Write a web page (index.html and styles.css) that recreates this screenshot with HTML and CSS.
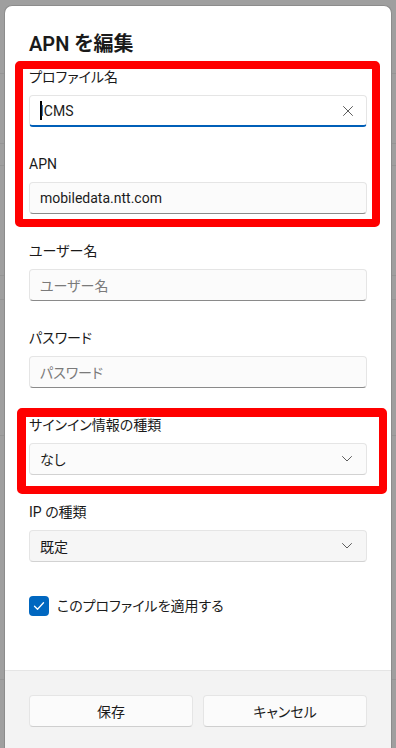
FILE: index.html
```html
<!DOCTYPE html>
<html>
<head>
  <title>APN を編集</title>
  <link rel="stylesheet" href="styles.css">
</head>
<body>
  <div class="dialog">
    <div class="dialog-body">
      <h1 class="dialog-title">APN を編集</h1>
      <div class="fields">
        <div class="field">
          <div class="field-label">プロファイル名</div>
          <div class="textbox focused">
            <span class="value"><span class="caret"></span>ICMS</span>
            <svg class="clear-icon" width="10" height="10" viewBox="0 0 10 10" fill="none" stroke="currentColor" stroke-width="1" stroke-linecap="round"><path d="M0.5 0.5l9 9M9.5 0.5l-9 9"/></svg>
          </div>
        </div>
        <div class="field">
          <div class="field-label">APN</div>
          <div class="textbox"><span class="value">mobiledata.ntt.com</span></div>
        </div>
        <div class="field">
          <div class="field-label">ユーザー名</div>
          <div class="textbox"><span class="placeholder">ユーザー名</span></div>
        </div>
        <div class="field">
          <div class="field-label">パスワード</div>
          <div class="textbox"><span class="placeholder">パスワード</span></div>
        </div>
        <div class="field">
          <div class="field-label">サインイン情報の種類</div>
          <div class="combobox">
            <span class="value">なし</span>
            <svg class="chevron" width="10" height="6" viewBox="0 0 10 6" fill="none" stroke="currentColor" stroke-width="1" stroke-linecap="round" stroke-linejoin="round"><path d="M0.5 0.5L5 5l4.5-4.5"/></svg>
          </div>
        </div>
        <div class="field">
          <div class="field-label">IP の種類</div>
          <div class="combobox hover">
            <span class="value">既定</span>
            <svg class="chevron" width="10" height="6" viewBox="0 0 10 6" fill="none" stroke="currentColor" stroke-width="1" stroke-linecap="round" stroke-linejoin="round"><path d="M0.5 0.5L5 5l4.5-4.5"/></svg>
          </div>
        </div>
      </div>
      <div class="check-row">
        <span class="check-box">
          <svg width="12" height="10" viewBox="0 0 12 10" fill="none" stroke="#fff" stroke-width="1.3" stroke-linecap="round" stroke-linejoin="round"><path d="M1.5 5.2l3 3 6-6.5"/></svg>
        </span>
        <span class="check-text">このプロファイルを適用する</span>
      </div>
    </div>
    <div class="dialog-footer">
      <button class="btn">保存</button>
      <button class="btn">キャンセル</button>
    </div>
  </div>
  <div class="mark mark-profile"></div>
  <div class="mark mark-signin"></div>
</body>
</html>
```

FILE: styles.css
```css
* {
  box-sizing: border-box;
  margin: 0;
  padding: 0;
}
body {
  width: 396px;
  height: 748px;
  overflow: hidden;
  position: relative;
  padding: 5px 4px 0;
  font-family: Roboto, "Noto Sans CJK JP", sans-serif;
  font-feature-settings: "palt";
  color: #1b1b1b;
  background-color: #9f9f9f;
  background-image:
    linear-gradient(#959595, #959595),
    linear-gradient(#959595, #959595),
    linear-gradient(#959595, #959595),
    linear-gradient(#959595, #959595),
    linear-gradient(#959595, #959595),
    linear-gradient(#959595, #959595),
    linear-gradient(#959595, #959595);
  background-size: 100% 1px;
  background-repeat: no-repeat;
  background-position: 0 73px, 0 143px, 0 165px, 0 275px, 0 299px, 0 435px, 0 679px;
}
.dialog {
  width: 388px;
  height: 745px;
  background: #fff;
  border: 1px solid #8c8c8c;
  border-bottom: none;
  border-radius: 8px 8px 0 0;
  display: flex;
  flex-direction: column;
  overflow: hidden;
}
.dialog-body {
  flex: 1;
  padding: 24px 24px 0;
}
.dialog-title {
  font-size: 20px;
  line-height: 28px;
  font-weight: 600;
  color: #1a1a1a;
  margin-bottom: 9px;
}
.fields {
  display: flex;
  flex-direction: column;
  gap: 27px;
}
.field-label {
  font-size: 14px;
  line-height: 20px;
  color: #1a1a1a;
  margin-bottom: 8px;
}
.textbox,
.combobox {
  height: 32px;
  display: flex;
  align-items: center;
  padding: 0 11px 0 10px;
  background: #fbfbfb;
  border: 1px solid #e5e5e5;
  border-bottom-color: #8a8a8a;
  border-radius: 4px;
  font-size: 14px;
}
.textbox.focused {
  background: #fff;
  border-bottom: 2px solid #005fb8;
}
.combobox {
  border-bottom-color: #d2d2d2;
  padding-right: 14px;
}
.combobox.hover {
  background: #f6f6f6;
}
.value {
  flex: 1;
  color: #1b1b1b;
  display: flex;
  align-items: center;
}
.placeholder {
  flex: 1;
  color: #7a7a7a;
}
.caret {
  width: 1.5px;
  height: 19px;
  background: #000;
  margin-right: -1.5px;
}
.clear-icon {
  color: #5d5d5d;
  margin-right: 2px;
}
.chevron {
  color: #5d5d5d;
}
.check-row {
  margin-top: 34px;
  display: flex;
  align-items: center;
  gap: 8px;
  font-size: 14px;
  line-height: 20px;
}
.check-box {
  width: 20px;
  height: 20px;
  border-radius: 4px;
  background: #0067c0;
  display: flex;
  align-items: center;
  justify-content: center;
}
.dialog-footer {
  height: 80px;
  flex-shrink: 0;
  background: #f3f3f3;
  border-top: 1px solid #e5e5e5;
  padding: 24px 24px 0;
  display: flex;
  gap: 10px;
}
.btn {
  flex: 1;
  height: 32px;
  background: #fbfbfb;
  border: 1px solid #e5e5e5;
  border-bottom-color: #cfcfcf;
  border-radius: 4px;
  font-family: inherit;
  font-feature-settings: "palt";
  font-size: 14px;
  color: #1b1b1b;
}
.mark {
  position: absolute;
  border: 8px solid #ff0000;
  border-radius: 5px;
}
.mark-profile {
  left: 15px;
  top: 61px;
  width: 365px;
  height: 166px;
}
.mark-signin {
  left: 17px;
  top: 408px;
  width: 370px;
  height: 86px;
  border-width: 9px 8px 8px 9px;
}
```
